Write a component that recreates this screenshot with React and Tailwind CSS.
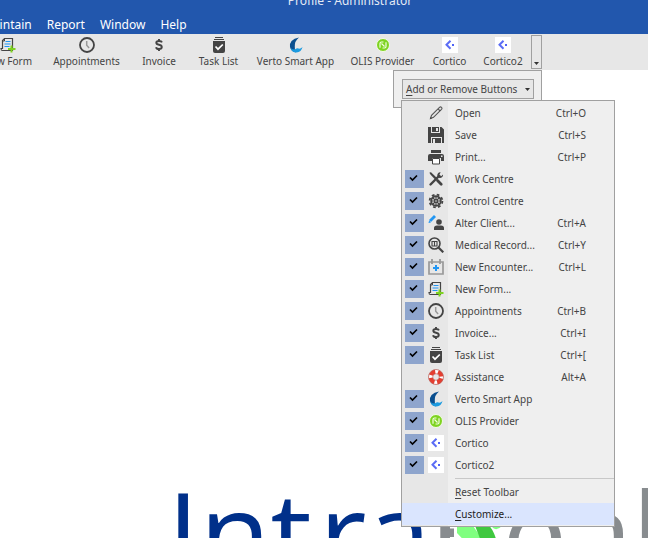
// App.jsx
// ─────────────────────────────────────────────────────────────────────────────
// Profile main window: title bar, menu bar and toolbar, with the toolbar's
// "Add or Remove Buttons" menu opened over the start page.
// ─────────────────────────────────────────────────────────────────────────────
import { clsx } from "clsx";

// ── Icons ────────────────────────────────────────────────────────────────────
function Icon({ children }) {
  return (
    <svg viewBox="0 0 16 16" className="w-4 h-4 flex-shrink-0" fill="none" aria-hidden="true">
      {children}
    </svg>
  );
}

const PencilIcon = () => (
  <Icon>
    <path d="M2.5 13.5l1-3.2 8-8q1-.9 2 0t0 2l-8 8zM10 3.8l2.2 2.2" stroke="#555" strokeWidth="1.1" />
    <path d="M2 14l.6-2 1.4 1.4z" fill="#444" />
  </Icon>
);

const SaveIcon = () => (
  <Icon>
    <path d="M0 0h3v6h9V0h1.5L16 2.5V16h-2v-6H3v6H0z" fill="#444" />
    <path d="M4 0h7v5H4z" fill="#444" />
    <path d="M8 1h2v3H8z" fill="#e7e7e7" />
    <path d="M2 6h12v3H2z" fill="#444" />
    <path d="M4 11h9v5H4z" fill="#444" />
    <path d="M5 12h2v4H5z" fill="#e7e7e7" />
  </Icon>
);

const PrintIcon = () => (
  <Icon>
    <path d="M3 1h10v3H3z" fill="#444" />
    <path d="M2 5h12q2 0 2 2v5h-3V9H4v3H0V7q0-2 2-2z" fill="#444" />
    <path d="M4.5 9.5h7V15h-7z" fill="#fff" stroke="#444" />
    <path d="M13 6.5h1.5V8H13z" fill="#e7e7e7" />
  </Icon>
);

const ToolsIcon = () => (
  <Icon>
    <path d="M1.5 1.5l1.5-.3L9 7 7.3 8.8 2 3z" fill="#444" />
    <path d="M2.5 13.5L10 6" stroke="#444" strokeWidth="2.4" strokeLinecap="round" />
    <path d="M12.6 1.4a3 3 0 0 0-3.2 4l1.6 1.4a3 3 0 0 0 4-3.4l-1.8 1.8-1.8-1.8z" fill="#444" />
    <path d="M9.5 9.5l3.7 3.7" stroke="#444" strokeWidth="2.8" strokeLinecap="round" />
  </Icon>
);

const WheelIcon = () => (
  <Icon>
    <circle cx="8" cy="8" r="6.4" stroke="#444" strokeWidth="1.8" strokeDasharray="2.7 2.326" />
    <circle cx="8" cy="8" r="4.8" stroke="#444" strokeWidth="1.9" />
    <path d="M8 3v10M3 8h10M4.5 4.5l7 7M11.5 4.5l-7 7" stroke="#444" strokeWidth="1.1" />
    <circle cx="8" cy="8" r="2" fill="#444" />
    <circle cx="8" cy="8" r=".8" fill="#e7e7e7" />
  </Icon>
);

const AlterClientIcon = () => (
  <Icon>
    <path d="M2 6l5-5" stroke="#2196f3" strokeWidth="2.8" />
    <path d="M.5 8l.6-2.4L3 7.4z" fill="#2196f3" />
    <circle cx="11" cy="7" r="2.8" fill="#444" />
    <path d="M6 15v-2q0-2.5 3-2.5h4q3 0 3 2.5v2z" fill="#444" />
  </Icon>
);

const RecordIcon = () => (
  <Icon>
    <circle cx="6.5" cy="6.5" r="5.5" stroke="#444" strokeWidth="1.6" />
    <path d="M10.5 10.5l4.8 4.8" stroke="#444" strokeWidth="2.2" />
    <path d="M4 4.5h5v4.5H4zM6.5 4.5V9" stroke="#444" strokeWidth="1.1" />
  </Icon>
);

const EncounterIcon = () => (
  <Icon>
    <path d="M1 3h14v12H1z" stroke="#999" strokeWidth="1.7" />
    <path d="M4 0v5M12 0v5" stroke="#999" strokeWidth="1.8" />
    <path d="M8 6v6M5 9h6" stroke="#2196f3" strokeWidth="2" />
  </Icon>
);

const FormIcon = () => (
  <Icon>
    <path d="M4.5 1.5h8v12h-10q-1.5 0-1.5-2h1.5v-8z" stroke="#444" strokeWidth="1.2" />
    <path d="M4.5 1.5v2.5H2.5" stroke="#444" />
    <path d="M5.5 4.5h5M4.5 7h6M4.5 9.5h5" stroke="#2196f3" strokeWidth="1.1" />
    <path d="M11.5 8.5v7M8 12h7.5" stroke="#7ed321" strokeWidth="2" />
  </Icon>
);

const ClockIcon = () => (
  <Icon>
    <circle cx="8" cy="8" r="7" stroke="#444" strokeWidth="1.8" />
    <path d="M7.7 4v4.3l2.4 2.6" stroke="#999" strokeWidth="1.5" />
  </Icon>
);

const DollarIcon = () => (
  <Icon>
    <path d="M11 5.3Q10.5 4 8 4 5.3 4 5.3 5.8q0 1.5 2.7 2t2.8 2.3Q10.8 12 8 12q-2.6 0-3-1.8M8 2v2M8 12v2" stroke="#444" strokeWidth="1.9" />
  </Icon>
);

const TaskIcon = () => (
  <Icon>
    <path d="M4 .5h8M3 2.5h10" stroke="#444" strokeWidth="1" />
    <path d="M2 4h12v10q0 2-2 2H4q-2 0-2-2z" fill="#444" />
    <path d="M4.5 9.5l2.5 2.7L11.8 7.5" stroke="#fff" strokeWidth="1.7" />
  </Icon>
);

const AssistanceIcon = () => (
  <Icon>
    <circle cx="8" cy="8" r="5.4" stroke="#fff" strokeWidth="4" />
    <circle cx="8" cy="8" r="5.4" stroke="#e53e30" strokeWidth="4" strokeDasharray="5.6 2.882" strokeDashoffset="7.04" />
    <circle cx="8" cy="8" r="7.5" stroke="#b5554d" strokeWidth=".7" />
    <circle cx="8" cy="8" r="3.3" stroke="#b5554d" strokeWidth=".6" />
  </Icon>
);

const VertoIcon = () => (
  <Icon>
    <path d="M11 .5Q1 2.500 2 10q1 4.600 6 5.500-1.500-2-1.200-6Q6.500 4 11 .5z" fill="#0a4f8f" />
    <path d="M2.500 11Q4 15.500 8.500 15.500q4.800-.3 6-5.500-2 2.300-4 1.600-1.800-.7-2.700.5Q5.500 13.300 2.500 11z" fill="#1c9be0" />
  </Icon>
);

const OlisIcon = () => (
  <Icon>
    <circle cx="8" cy="8" r="6.5" fill="#7ed321" stroke="#f4fbe9" strokeWidth="1" />
    <path d="M5 10.8V6.500q0-1.500 1.500-1.500h2M6.500 6.500L9.500 9.500M11 5.200v4.300q0 1.500-1.500 1.500h-2" stroke="#f2ffe0" strokeWidth="1.200" />
  </Icon>
);

const CorticoIcon = () => (
  <Icon>
    <path d="M0 0h16v16H0z" fill="#fff" />
    <path d="M8.5 3.8L4.5 7.8l4 4" stroke="#5b6cf5" strokeWidth="2" />
    <path d="M10 7h2v2h-2z" fill="#4f63f7" />
  </Icon>
);

// ── Data ─────────────────────────────────────────────────────────────────────
const MENUS = ["Maintain", "Report", "Window", "Help"];

const TOOLBAR = [
  { label: "New Form", icon: FormIcon, width: "w-[68px]" },
  { label: "Appointments", icon: ClockIcon, width: "w-[89px]" },
  { label: "Invoice", icon: DollarIcon, width: "w-14" },
  { label: "Task List", icon: TaskIcon, width: "w-[63px]" },
  { label: "Verto Smart App", icon: VertoIcon, width: "w-[91px]" },
  { label: "OLIS Provider", icon: OlisIcon, width: "w-[83px]" },
  { label: "Cortico", icon: CorticoIcon, width: "w-[51px]" },
  { label: "Cortico2", icon: CorticoIcon, width: "w-14" },
];

const COMMANDS = [
  { label: "Open", keys: "Ctrl+O", icon: PencilIcon },
  { label: "Save", keys: "Ctrl+S", icon: SaveIcon },
  { label: "Print...", keys: "Ctrl+P", icon: PrintIcon },
  { label: "Work Centre", icon: ToolsIcon, shown: true },
  { label: "Control Centre", icon: WheelIcon, shown: true },
  { label: "Alter Client...", keys: "Ctrl+A", icon: AlterClientIcon, shown: true },
  { label: "Medical Record...", keys: "Ctrl+Y", icon: RecordIcon, shown: true },
  { label: "New Encounter...", keys: "Ctrl+L", icon: EncounterIcon, shown: true },
  { label: "New Form...", icon: FormIcon, shown: true },
  { label: "Appointments", keys: "Ctrl+B", icon: ClockIcon, shown: true },
  { label: "Invoice...", keys: "Ctrl+I", icon: DollarIcon, shown: true },
  { label: "Task List", keys: "Ctrl+[", icon: TaskIcon, shown: true },
  { label: "Assistance", keys: "Alt+A", icon: AssistanceIcon },
  { label: "Verto Smart App", icon: VertoIcon, shown: true },
  { label: "OLIS Provider", icon: OlisIcon, shown: true },
  { label: "Cortico", icon: CorticoIcon, shown: true },
  { label: "Cortico2", icon: CorticoIcon, shown: true },
];

// ── Menu parts ───────────────────────────────────────────────────────────────
function CommandRow({ label, keys, icon: Glyph, shown }) {
  return (
    <label className="flex items-center h-[22px] pl-[3px] pr-7">
      <span className="grid flex-shrink-0">
        <input
          type="checkbox"
          defaultChecked={shown}
          className="peer appearance-none col-start-1 row-start-1 w-[19px] h-[18px] checked:bg-[#8ea5cd]"
        />
        <svg
          viewBox="0 0 19 18"
          className="col-start-1 row-start-1 w-[19px] h-[18px] invisible peer-checked:visible pointer-events-none"
          fill="none"
          aria-hidden="true"
        >
          <path d="M5 7.5L7.5 10l4.500-4.500" stroke="#000" strokeWidth="1.700" />
        </svg>
      </span>
      <span className="ml-1 mr-[11px]">
        <Glyph />
      </span>
      <span className="flex-1">{label}</span>
      <span>{keys}</span>
    </label>
  );
}

function ActionRow({ mnemonic, rest, active }) {
  return (
    <button
      className={clsx(
        "flex items-center w-full h-[22px] pl-[53px] text-left",
        active && "bg-[#dae5fe] text-[#222]",
      )}
    >
      <span>
        <span className="underline underline-offset-2">{mnemonic}</span>
        {rest}
      </span>
    </button>
  );
}

function ButtonsMenu() {
  return (
    <div className="absolute left-[7px] top-[29px] w-[214px] py-px border border-[#a0a0a0] bg-[linear-gradient(to_right,#e7e7e7_46px,#efefef_46px)]">
      {COMMANDS.map((c) => (
        <CommandRow key={c.label} {...c} />
      ))}
      <div className="h-[5px] pt-[2px] pl-[53px]">
        <div className="border-t border-[#c8c8c8]" />
      </div>
      <ActionRow mnemonic="R" rest="eset Toolbar" />
      <ActionRow mnemonic="C" rest="ustomize..." active />
    </div>
  );
}

function OverflowMenu() {
  return (
    <div className="relative my-px">
      <button
        aria-label="Toolbar options"
        className="flex items-end justify-center w-[11px] h-[34px] pb-[3px] border border-[#a0a0a0]"
      >
        <svg viewBox="0 0 5 3" className="w-[5px] h-[3px] flex-shrink-0" aria-hidden="true">
          <path d="M0 0h5L2.5 3z" fill="#333" />
        </svg>
      </button>
      <div className="absolute right-0 top-[35px] w-[149px] h-[38px] pt-2 pl-2 border border-[#a0a0a0] bg-[#efefef]">
        <button className="flex items-center justify-between h-5 w-[132px] px-[3px] border border-[#a0a0a0] bg-[#e7e7e7] whitespace-nowrap">
          <span>
            <span className="underline underline-offset-2">A</span>dd or Remove Buttons
          </span>
          <svg viewBox="0 0 5 3" className="w-[5px] h-[3px] flex-shrink-0" aria-hidden="true">
            <path d="M0 0h5L2.5 3z" fill="#333" />
          </svg>
        </button>
        <ButtonsMenu />
      </div>
    </div>
  );
}

// ── Start page logo ──────────────────────────────────────────────────────────
function Logo() {
  return (
    <div className="flex *:flex-shrink-0 pl-[167px] pt-[403px] font-['Open_Sans',sans-serif] font-medium text-[116px] leading-none text-[#00308a]">
      <span className="w-[152px]">Int</span>
      <span className="w-[110px]">ra</span>
      <span className="w-[25px] overflow-hidden text-[#888c8f]">H</span>
      <svg viewBox="0 0 48 116" className="w-12 h-[116px]" aria-hidden="true">
        <path d="M3 50h14l18 26H18L3 60z" fill="#80ff80" />
        <path d="M20 50h13q9 9 11 26H30z" fill="#40c840" />
        <path d="M36 50h12v3q-5 5-9 2z" fill="#80ff80" />
      </svg>
      <span className="w-[66px] text-[#888c8f]">e</span>
      <span className="w-16 text-[#888c8f]">a</span>
      <span className="text-[#888c8f]">l</span>
    </div>
  );
}

export default function App() {
  return (
    <div className="flex flex-col h-screen overflow-hidden bg-white font-['Noto_Sans',sans-serif] text-[10px] leading-[14px] text-[#444]">
      <header className="bg-[#2257ad] text-white text-[12px] leading-4">
        <h1 className="-mt-[7px] pl-[52px] text-center text-[#e3eaf5]">Profile - Administrator</h1>
        <nav className="flex gap-[15px] h-[25px] pt-2 -ml-[18px]">
          {MENUS.map((m) => (
            <button key={m} className="h-4">
              {m}
            </button>
          ))}
        </nav>
      </header>

      <div className="flex h-9 flex-shrink-0 -ml-[26px] bg-[#e7e7e7]">
        {TOOLBAR.map(({ label, icon: Glyph, width }) => (
          <button
            key={label}
            className={clsx("flex flex-col items-center gap-px pt-[3px] flex-shrink-0 whitespace-nowrap", width)}
          >
            <Glyph />
            {label}
          </button>
        ))}
        <OverflowMenu />
      </div>

      <main className="flex-1 min-h-0">
        <Logo />
      </main>
    </div>
  );
}
